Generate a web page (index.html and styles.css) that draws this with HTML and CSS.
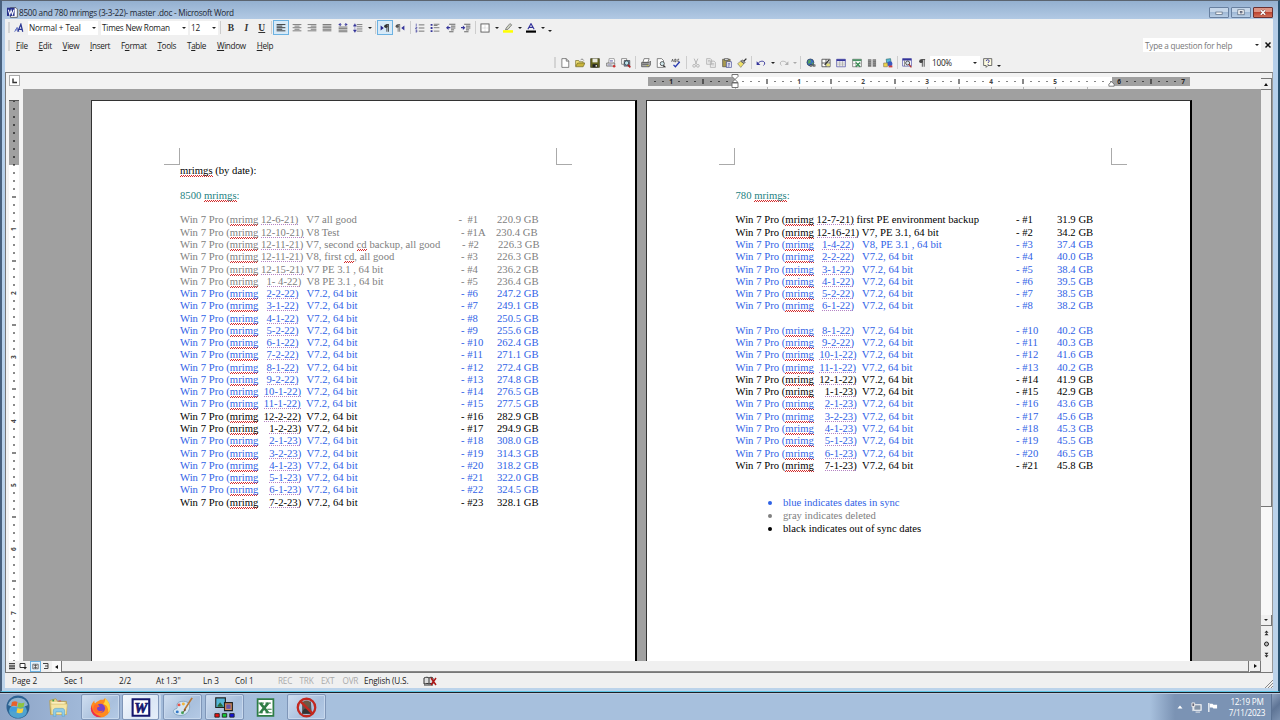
FILE: index.html
```html
<!DOCTYPE html>
<html lang="en">
<head>
    <meta charset="UTF-8">
    <meta name="viewport" content="width=device-width, initial-scale=1.0">
    <title>8500 and 780 mrimgs (3-3-22)- master .doc - Microsoft Word</title>
    <link rel="stylesheet" href="styles.css">
</head>
<body>

<div class="window">

    <!-- Title bar -->
    <div class="titlebar">
        <svg class="title-icon" viewBox="0 0 16 16"><path d="M5 1h8l2 2v12H5z" fill="#fff" stroke="#333"/><path d="M0 1h11v12H0z" fill="#26318c"/><path d="M2 4l2 7 2-6 2 6 2-7" fill="none" stroke="#fff" stroke-width="1.5"/></svg>
        <span class="title-text">8500 and 780 mrimgs (3-3-22)- master .doc - Microsoft Word</span>
        <div class="win-btns">
            <span class="win-btn"><svg viewBox="0 0 20 10"><rect x="6.500" y="4.500" width="7" height="2.500" fill="#fff" stroke="#556579" stroke-width=".8"/></svg></span>
            <span class="win-btn"><svg viewBox="0 0 20 10"><rect x="6.500" y="2" width="7" height="5.500" fill="#fff" stroke="#556579" stroke-width=".8"/><rect x="9" y="4" width="2.200" height="1.600" fill="#8fa9c9" stroke="#445" stroke-width=".7"/></svg></span>
            <span class="win-btn close"><svg viewBox="0 0 20 10"><path d="M7.500 2.500l5 5M12.500 2.500l-5 5" stroke="#6b3a3a" stroke-width="2.600"/><path d="M7.500 2.500l5 5M12.500 2.500l-5 5" stroke="#fff" stroke-width="1.600"/></svg></span>
        </div>
    </div>

    <!-- Formatting toolbar -->
    <div class="toolbar">
        <i class="handle first"></i>
        <span class="cell styles"><svg viewBox="0 0 16 16"><path d="M1 14l4-7 3 7M2 11h5" fill="none" stroke="#5b6bc0" stroke-width="1.500"/><path d="M6 14l5-12 3 12M8 10h6" fill="none" stroke="#2b3894" stroke-width="2"/></svg></span>
        <span class="combo style-box">Normal + Teal<i class="arrow"></i></span>
        <span class="combo font-box">Times New Roman<i class="arrow"></i></span>
        <span class="combo size-box">12<i class="arrow"></i></span>
        <i class="sep wide"></i>
        <span class="cell letter"><b>B</b></span>
        <span class="cell letter"><em>I</em></span>
        <span class="cell letter"><u>U</u></span>
        <i class="sep"></i>
        <span class="cell on"><svg viewBox="0 0 16 16"><path d="M1 2.500h14M1 5h9M1 7.500h14M1 10h9M1 12.500h14" stroke="#333" stroke-width="1.500"/></svg></span>
        <span class="cell"><svg viewBox="0 0 16 16"><path d="M1 2.500h14M4 5h8M1 7.500h14M4 10h8M1 12.500h14" stroke="#777" stroke-width="1.500"/></svg></span>
        <span class="cell"><svg viewBox="0 0 16 16"><path d="M1 2.500h14M6 5h9M1 7.500h14M6 10h9M1 12.500h14" stroke="#777" stroke-width="1.500"/></svg></span>
        <span class="cell"><svg viewBox="0 0 16 16"><path d="M1 2.500h14M1 5h14M1 7.500h14M1 10h14M1 12.500h14" stroke="#777" stroke-width="1.600"/></svg></span>
        <span class="cell"><svg viewBox="0 0 16 16"><path d="M1 6.500h14M1 9h14M1 11.500h14M1 14h14" stroke="#777" stroke-width="1.600"/><path d="M1 2.500l3-2v4zM15 2.500l-3-2v4zM4 2.500h2M10 2.500h2" fill="#34349a" stroke="#34349a" stroke-width=".7"/></svg></span>
        <span class="cell"><svg viewBox="0 0 16 16"><path d="M6 2.500h9M6 6h9M6 9.500h9M6 13h9" stroke="#666" stroke-width="1.300"/><path d="M3 1l2.500 4h-5zM3 15l2.500-4h-5zM3 5v6" fill="#34349a" stroke="#34349a" stroke-width=".6"/></svg></span>
        <i class="arrow drop"></i>
        <i class="sep"></i>
        <span class="cell on"><svg viewBox="0 0 16 16"><path d="M1 4l5 4-5 4z" fill="#22228a"/><path d="M14 2.500h-4M11 2v12M13.500 2v12" stroke="#333" stroke-width="1.400"/><circle cx="9.500" cy="5" r="2.800" fill="#333"/></svg></span>
        <span class="cell"><svg viewBox="0 0 16 16"><path d="M15 4l-5 4 5 4z" fill="#34349a"/><path d="M8 2.500H4M5 2v12M7.500 2v12" stroke="#555" stroke-width="1.200"/><circle cx="3.500" cy="5" r="2.500" fill="#555"/></svg></span>
        <i class="sep"></i>
        <span class="cell"><svg viewBox="0 0 16 16"><path d="M6 3h9M6 8h9M6 13h9" stroke="#666" stroke-width="1.400"/><path d="M2 1v4M1 6.500h2v1.500H1v1.500h2.500M1 11.500h2v3H1M1 13h2" fill="none" stroke="#34349a" stroke-width="1"/></svg></span>
        <span class="cell"><svg viewBox="0 0 16 16"><path d="M6 2h9M6 4h6M6 7.500h9M6 13h9" stroke="#666" stroke-width="1.300"/><path d="M1 1.500h3v3H1zM1 6.500h3v3H1zM1 11.500h3v3H1z" fill="#34349a"/></svg></span>
        <span class="cell"><svg viewBox="0 0 16 16"><path d="M5 2h10M8 5h7M8 8h7M8 11h5M5 14h7" stroke="#555" stroke-width="1.400"/><path d="M0 7.500l4-3.500v2.500h3v2H4V11z" fill="#34349a"/></svg></span>
        <span class="cell"><svg viewBox="0 0 16 16"><path d="M5 2h10M8 5h7M8 8h7M8 11h5M5 14h7" stroke="#555" stroke-width="1.400"/><path d="M7 7.500L3 4v2.500H0v2h3V11z" fill="#34349a"/></svg></span>
        <i class="sep"></i>
        <span class="cell"><svg viewBox="0 0 16 16"><rect x="1.500" y="1.500" width="13" height="13" fill="#fff" stroke="#555" stroke-width="1.400"/><path d="M8 3v10M3 8h10" stroke="#aaa" stroke-dasharray="1 1"/></svg></span>
        <i class="arrow drop"></i>
        <span class="cell"><svg viewBox="0 0 16 16"><path d="M5 8l6-7 3 2-6 7-4 1z" fill="#cfd4c4" stroke="#555"/><path d="M0 11.500h16v4H0z" fill="#ff0"/></svg></span>
        <i class="arrow drop"></i>
        <span class="cell"><svg viewBox="0 0 16 16"><path d="M3 10L8 1l5 9M5 7h6" fill="none" stroke="#34349a" stroke-width="1.800"/><path d="M0 12h16v3.500H0z" fill="#000"/></svg></span>
        <i class="arrow drop"></i>
        <i class="arrow more"></i>
    </div>

    <!-- Menu bar -->
    <div class="menubar">
        <i class="handle first"></i>
        <div class="menu">
            <span><u>F</u>ile</span>
            <span><u>E</u>dit</span>
            <span><u>V</u>iew</span>
            <span><u>I</u>nsert</span>
            <span>F<u>o</u>rmat</span>
            <span><u>T</u>ools</span>
            <span>T<u>a</u>ble</span>
            <span><u>W</u>indow</span>
            <span><u>H</u>elp</span>
        </div>
        <span class="combo question">Type a question for help<i class="arrow"></i></span>
        <svg class="close-doc" viewBox="0 0 8 8"><path d="M1.500 1.500l5 5M6.500 1.500l-5 5" stroke="#111" stroke-width="1.500"/></svg>
    </div>

    <!-- Standard toolbar -->
    <div class="toolbar standard">
        <i class="handle"></i>
        <span class="cell"><svg viewBox="0 0 16 16"><path d="M3 1h7l4 4v10H3z" fill="#fff" stroke="#444"/><path d="M10 1v4h4" fill="none" stroke="#444"/></svg></span>
        <span class="cell"><svg viewBox="0 0 16 16"><path d="M1 13V4h5l1 2h6v2" fill="#f2e37d" stroke="#66601f"/><path d="M1 14l3-6h12l-3 6z" fill="#c9b53c" stroke="#66601f"/><path d="M9 3c2-2 4-1 5 1" fill="none" stroke="#444"/></svg></span>
        <span class="cell"><svg viewBox="0 0 16 16"><path d="M1 1h14v14H1z" fill="#65651f" stroke="#2e2e16"/><path d="M4 1h8v6H4z" fill="#e9e9df"/><path d="M4 10h8v5H4z" fill="#222"/><path d="M9 11h2v3H9z" fill="#eee"/></svg></span>
        <span class="cell"><svg viewBox="0 0 16 16"><path d="M5 1h8l1 4-2 4H4z" fill="#fff" stroke="#777"/><path d="M1 8h13v5H1z" fill="#ddd" stroke="#555"/><path d="M3 11h6M6 4h5M6 6h5" stroke="#66a"/><circle cx="13" cy="13" r="2" fill="#c33"/></svg></span>
        <span class="cell"><svg viewBox="0 0 16 16"><path d="M1 1h8v9H1z" fill="#fff" stroke="#555"/><path d="M5 4h9v9H5z" fill="#8fa6d8" stroke="#333"/><circle cx="9" cy="8" r="3.500" fill="#bfe4ee" stroke="#233" stroke-width="1.300"/><path d="M11 11l4 4" stroke="#b02020" stroke-width="2.500"/></svg></span>
        <i class="sep"></i>
        <span class="cell"><svg viewBox="0 0 16 16"><path d="M5 1h8l-2 6H3z" fill="#fff" stroke="#444"/><path d="M1 7h12l2-2v6l-2 3H1z" fill="#a9a9a9" stroke="#333"/><path d="M2 10h10" stroke="#333"/><path d="M9 12h3" stroke="#cc0"/></svg></span>
        <span class="cell"><svg viewBox="0 0 16 16"><path d="M2 1h7l3 3v11H2z" fill="#fff" stroke="#444"/><circle cx="10" cy="9" r="3.300" fill="#cfe6ea" stroke="#333" stroke-width="1.200"/><path d="M12 12l3 3" stroke="#333" stroke-width="2"/></svg></span>
        <span class="cell"><svg viewBox="0 0 16 16"><path d="M1 6l1.500-4L4 6M6 2v4h2V2zM13 2h-2v4h2" fill="none" stroke="#333" stroke-width="1.100"/><path d="M4 11l3 3 7-8" fill="none" stroke="#2638b0" stroke-width="2"/></svg></span>
        <i class="sep"></i>
        <span class="cell"><svg viewBox="0 0 16 16"><path d="M5 1l4 9M11 1L7 10" stroke="#aaa" stroke-width="1.300"/><circle cx="5" cy="12.500" r="2.200" fill="none" stroke="#aaa" stroke-width="1.300"/><circle cx="11" cy="12.500" r="2.200" fill="none" stroke="#aaa" stroke-width="1.300"/></svg></span>
        <span class="cell"><svg viewBox="0 0 16 16"><path d="M1 1h6l2 2v7H1zM7 5h6l2 2v8H7z" fill="#eee" stroke="#aaa" stroke-width="1.200"/><path d="M3 4h4M3 6h3M9 9h4M9 11h4" stroke="#aaa"/></svg></span>
        <span class="cell"><svg viewBox="0 0 16 16"><path d="M1 2h12v12H1z" fill="#a89a50" stroke="#444"/><path d="M4 1h6v3H4z" fill="#ddd" stroke="#444"/><path d="M7 6h8v9H7z" fill="#fff" stroke="#26318c"/><path d="M9 9h4M9 11h4M9 13h3" stroke="#26318c"/></svg></span>
        <span class="cell"><svg viewBox="0 0 16 16"><path d="M1 9l5-4 5 4-5 6z" fill="#f0e168" stroke="#777"/><path d="M6 5l3-2 4 4-2 2z" fill="#999" stroke="#444"/><path d="M11 5l4-4" stroke="#333" stroke-width="2.200"/></svg></span>
        <i class="sep"></i>
        <span class="cell"><svg viewBox="0 0 16 16"><path d="M1 5v6h6z" fill="#34349a"/><path d="M3 9c3-5 10-5 11-1 0 2-1 3-2 4" fill="none" stroke="#34349a" stroke-width="1.500"/></svg></span>
        <i class="arrow drop"></i>
        <span class="cell"><svg viewBox="0 0 16 16"><path d="M15 5v6H9z" fill="#b0b0b0"/><path d="M13 9C10 4 3 4 2 8c0 2 1 3 2 4" fill="none" stroke="#b0b0b0" stroke-width="1.400"/></svg></span>
        <i class="arrow drop pale"></i>
        <i class="sep"></i>
        <span class="cell"><svg viewBox="0 0 16 16"><circle cx="7" cy="7" r="5.500" fill="#3c6fc0" stroke="#234"/><path d="M4 3l4 1-1 4-4 1zM9 7l3 1-2 3z" fill="#59a851"/><path d="M6 12h4M11 12h4" stroke="#333" stroke-width="3"/><path d="M7 12h2M12 12h2" stroke="#ddd"/></svg></span>
        <span class="cell"><svg viewBox="0 0 16 16"><path d="M1.500 2h13v12h-13zM1.500 8h13M8 2v12" fill="#fff" stroke="#444" stroke-width="1.300"/><path d="M6 11l7-8" stroke="#333" stroke-width="2"/><path d="M9 9h5v4H9z" fill="#e7e177"/></svg></span>
        <span class="cell"><svg viewBox="0 0 16 16"><path d="M1 2h14v12H1z" fill="#fff" stroke="#34349a"/><path d="M1 2h14v3H1z" fill="#34349a"/><path d="M1 8h14M1 11h14M6 5v9M10.500 5v9" stroke="#999"/></svg></span>
        <span class="cell"><svg viewBox="0 0 16 16"><path d="M1 2h14v12H1z" fill="#fff" stroke="#555"/><path d="M1 2h14v3H1z" fill="#4a9264"/><path d="M1 9h14M6 5v9" stroke="#999"/><path d="M6 7l7 7M13 7l-7 7" stroke="#2f8a4c" stroke-width="2"/></svg></span>
        <span class="cell"><svg viewBox="0 0 16 16"><path d="M1.500 2h5.500v12H1.500zM9 2h5.500v12H9z" fill="#777"/><path d="M2 4h5M2 7h5M2 10h5M9 4h5M9 7h5M9 10h5" stroke="#aaa" stroke-width=".7"/></svg></span>
        <span class="cell"><svg viewBox="0 0 16 16"><path d="M5 2l7-1 1 7H6z" fill="#56b8d6" stroke="#266"/><circle cx="11" cy="9" r="4" fill="#3b58c0"/><path d="M1 8h6v6H1z" fill="#f0d648" stroke="#875"/><path d="M9 12h6v3H9z" fill="#cc4040"/></svg></span>
        <i class="sep"></i>
        <span class="cell"><svg viewBox="0 0 16 16"><path d="M1 1h14v12H1z" fill="#fff" stroke="#34349a"/><path d="M1 1h14v3H1z" fill="#34349a"/><path d="M4 4v9" stroke="#555"/><circle cx="9" cy="8" r="3.200" fill="#d8e4ec" stroke="#333" stroke-width="1.300"/><path d="M11 10l4 5" stroke="#a33" stroke-width="2"/></svg></span>
        <span class="cell"><svg viewBox="0 0 16 16"><path d="M13 2.500H7M8.500 2v12M11.500 2v12" stroke="#444" stroke-width="1.400"/><circle cx="6.500" cy="5" r="3" fill="#444"/></svg></span>
        <span class="combo zoom">100%<i class="arrow"></i></span>
        <span class="cell"><svg viewBox="0 0 16 16"><path d="M1 1h13v11H8l-3 3v-3H1z" fill="#fdfbe0" stroke="#444" stroke-width="1.200"/><path d="M5 5c0-3 5-3 5 0 0 1.500-2 1.500-2 3M8 9.500v1.500" fill="none" stroke="#34349a" stroke-width="1.500"/></svg></span>
        <i class="arrow more"></i>
    </div>

    <div class="workspace">

        <!-- Horizontal ruler -->
        <div class="hruler">
            <span class="tab-kind"><svg viewBox="0 0 9 9"><path d="M3 2.500v4h4" fill="none" stroke="#333" stroke-width="1.400"/></svg></span>
            <div class="hscale">
                <div class="hpart margin left"><b>1</b></div>
                <div class="hpart text"><b>1</b><b>2</b><b>3</b><b>4</b><b>5</b></div>
                <div class="hpart margin right"><b>6</b><b>7</b></div>
                <svg class="indent-left" viewBox="0 0 8 14"><path d="M1 .5h6v2L4 5.500 1 2.500zM4 5.500l3 3H1zM1 9h6v4.500H1z" fill="#fff" stroke="#666" stroke-width=".9"/></svg>
                <svg class="indent-right" viewBox="0 0 8 6"><path d="M1 5.500V3l3-2.500L7 3v2.500z" fill="#fff" stroke="#666" stroke-width=".9"/></svg>
            </div>
        </div>

        <div class="vruler">
            <div class="vpart margin"></div>
            <div class="vpart text"><b>1</b><b>2</b><b>3</b><b>4</b><b>5</b><b>6</b><b>7</b></div>
        </div>

        <div class="pages">
            <div class="page">
                <i class="corner tl"></i><i class="corner tr"></i>
                <p><s>mrimgs</s> (by date):</p>
                <p></p>
                <p class="teal">8500 <s>mrimgs</s>:</p>
                <p></p>
                <div class="list">
                    <p class="row gray"><span>Win 7 Pro (<s>mrimg</s> <q>12-6-21)</q>   V7 all good</span><span class="back2">-  #1</span><span>220.9 GB</span></p>
                    <p class="row gray"><span>Win 7 Pro (<s>mrimg</s> <q>12-10-21)</q> V8 Test</span><span>- #1A</span><span class="back1">230.4 GB</span></p>
                    <p class="row gray"><span>Win 7 Pro (<s>mrimg</s> <q>12-11-21)</q> V7, second <s>cd</s> backup, all good</span><span class="fwd1">- #2</span><span class="fwd1">226.3 GB</span></p>
                    <p class="row gray"><span>Win 7 Pro (<s>mrimg</s> <q>12-11-21)</q> V8, first <s>cd</s>, all good</span><span>- #3</span><span>226.3 GB</span></p>
                    <p class="row gray"><span>Win 7 Pro (<s>mrimg</s> <q>12-15-21)</q> V7 PE 3.1 , 64 bit</span><span>- #4</span><span>236.2 GB</span></p>
                    <p class="row gray"><span>Win 7 Pro (<s>mrimg</s>   <q>1- 4-22)</q>  V8 PE 3.1 , 64 bit</span><span>- #5</span><span>236.4 GB</span></p>
                    <p class="row blue"><span>Win 7 Pro (<s>mrimg</s>   <q>2-2-22)</q>   V7.2, 64 bit</span><span>- #6</span><span>247.2 GB</span></p>
                    <p class="row blue"><span>Win 7 Pro (<s>mrimg</s>   <q>3-1-22)</q>   V7.2, 64 bit</span><span>- #7</span><span>249.1 GB</span></p>
                    <p class="row blue"><span>Win 7 Pro (<s>mrimg</s>   <q>4-1-22)</q>   V7.2, 64 bit</span><span>- #8</span><span>250.5 GB</span></p>
                    <p class="row blue"><span>Win 7 Pro (<s>mrimg</s>   <q>5-2-22)</q>   V7.2, 64 bit</span><span>- #9</span><span>255.6 GB</span></p>
                    <p class="row blue"><span>Win 7 Pro (<s>mrimg</s>   <q>6-1-22)</q>   V7.2, 64 bit</span><span>- #10</span><span>262.4 GB</span></p>
                    <p class="row blue"><span>Win 7 Pro (<s>mrimg</s>   <q>7-2-22)</q>   V7.2, 64 bit</span><span>- #11</span><span>271.1 GB</span></p>
                    <p class="row blue"><span>Win 7 Pro (<s>mrimg</s>   <q>8-1-22)</q>   V7.2, 64 bit</span><span>- #12</span><span>272.4 GB</span></p>
                    <p class="row blue"><span>Win 7 Pro (<s>mrimg</s>   <q>9-2-22)</q>   V7.2, 64 bit</span><span>- #13</span><span>274.8 GB</span></p>
                    <p class="row blue"><span>Win 7 Pro (<s>mrimg</s>  <q>10-1-22)</q>  V7.2, 64 bit</span><span>- #14</span><span>276.5 GB</span></p>
                    <p class="row blue"><span>Win 7 Pro (<s>mrimg</s>  <q>11-1-22)</q>  V7.2, 64 bit</span><span>- #15</span><span>277.5 GB</span></p>
                    <p class="row"><span>Win 7 Pro (<s>mrimg</s>  <q>12-2-22)</q>  V7.2, 64 bit</span><span>- #16</span><span>282.9 GB</span></p>
                    <p class="row"><span>Win 7 Pro (<s>mrimg</s>    <q>1-2-23)</q>  V7.2, 64 bit</span><span>- #17</span><span>294.9 GB</span></p>
                    <p class="row blue"><span>Win 7 Pro (<s>mrimg</s>    <q>2-1-23)</q>  V7.2, 64 bit</span><span>- #18</span><span>308.0 GB</span></p>
                    <p class="row blue"><span>Win 7 Pro (<s>mrimg</s>    <q>3-2-23)</q>  V7.2, 64 bit</span><span>- #19</span><span>314.3 GB</span></p>
                    <p class="row blue"><span>Win 7 Pro (<s>mrimg</s>    <q>4-1-23)</q>  V7.2, 64 bit</span><span>- #20</span><span>318.2 GB</span></p>
                    <p class="row blue"><span>Win 7 Pro (<s>mrimg</s>    <q>5-1-23)</q>  V7.2, 64 bit</span><span>- #21</span><span>322.0 GB</span></p>
                    <p class="row blue"><span>Win 7 Pro (<s>mrimg</s>    <q>6-1-23)</q>  V7.2, 64 bit</span><span>- #22</span><span>324.5 GB</span></p>
                    <p class="row"><span>Win 7 Pro (<s>mrimg</s>    <q>7-2-23)</q>  V7.2, 64 bit</span><span>- #23</span><span>328.1 GB</span></p>
                </div>
            </div>

            <div class="page second">
                <i class="corner tl"></i><i class="corner tr"></i>
                <p></p>
                <p></p>
                <p class="teal">780 <s>mrimgs</s>:</p>
                <p></p>
                <div class="list">
                    <p class="row"><span>Win 7 Pro (<s>mrimg</s> <q>12-7-21)</q> first PE environment backup</span><span>- #1</span><span>31.9 GB</span></p>
                    <p class="row"><span>Win 7 Pro (<s>mrimg</s> <q>12-16-21)</q> V7, PE 3.1, 64 bit</span><span>- #2</span><span>34.2 GB</span></p>
                    <p class="row blue"><span>Win 7 Pro (<s>mrimg</s>   <q>1-4-22)</q>   V8, PE 3.1 , 64 bit</span><span>- #3</span><span>37.4 GB</span></p>
                    <p class="row blue"><span>Win 7 Pro (<s>mrimg</s>   <q>2-2-22)</q>   V7.2, 64 bit</span><span>- #4</span><span>40.0 GB</span></p>
                    <p class="row blue"><span>Win 7 Pro (<s>mrimg</s>   <q>3-1-22)</q>   V7.2, 64 bit</span><span>- #5</span><span>38.4 GB</span></p>
                    <p class="row blue"><span>Win 7 Pro (<s>mrimg</s>   <q>4-1-22)</q>   V7.2, 64 bit</span><span>- #6</span><span>39.5 GB</span></p>
                    <p class="row blue"><span>Win 7 Pro (<s>mrimg</s>   <q>5-2-22)</q>   V7.2, 64 bit</span><span>- #7</span><span>38.5 GB</span></p>
                    <p class="row blue"><span>Win 7 Pro (<s>mrimg</s>   <q>6-1-22)</q>   V7.2, 64 bit</span><span>- #8</span><span>38.2 GB</span></p>
                    <p></p>
                    <p class="row blue"><span>Win 7 Pro (<s>mrimg</s>   <q>8-1-22)</q>   V7.2, 64 bit</span><span>- #10</span><span>40.2 GB</span></p>
                    <p class="row blue"><span>Win 7 Pro (<s>mrimg</s>   <q>9-2-22)</q>   V7.2, 64 bit</span><span>- #11</span><span>40.3 GB</span></p>
                    <p class="row blue"><span>Win 7 Pro (<s>mrimg</s>  <q>10-1-22)</q>  V7.2, 64 bit</span><span>- #12</span><span>41.6 GB</span></p>
                    <p class="row blue"><span>Win 7 Pro (<s>mrimg</s>  <q>11-1-22)</q>  V7.2, 64 bit</span><span>- #13</span><span>40.2 GB</span></p>
                    <p class="row"><span>Win 7 Pro (<s>mrimg</s>  <q>12-1-22)</q>  V7.2, 64 bit</span><span>- #14</span><span>41.9 GB</span></p>
                    <p class="row"><span>Win 7 Pro (<s>mrimg</s>    <q>1-1-23)</q>  V7.2, 64 bit</span><span>- #15</span><span>42.9 GB</span></p>
                    <p class="row blue"><span>Win 7 Pro (<s>mrimg</s>    <q>2-1-23)</q>  V7.2, 64 bit</span><span>- #16</span><span>43.6 GB</span></p>
                    <p class="row blue"><span>Win 7 Pro (<s>mrimg</s>    <q>3-2-23)</q>  V7.2, 64 bit</span><span>- #17</span><span>45.6 GB</span></p>
                    <p class="row blue"><span>Win 7 Pro (<s>mrimg</s>    <q>4-1-23)</q>  V7.2, 64 bit</span><span>- #18</span><span>45.3 GB</span></p>
                    <p class="row blue"><span>Win 7 Pro (<s>mrimg</s>    <q>5-1-23)</q>  V7.2, 64 bit</span><span>- #19</span><span>45.5 GB</span></p>
                    <p class="row blue"><span>Win 7 Pro (<s>mrimg</s>    <q>6-1-23)</q>  V7.2, 64 bit</span><span>- #20</span><span>46.5 GB</span></p>
                    <p class="row"><span>Win 7 Pro (<s>mrimg</s>    <q>7-1-23)</q>  V7.2, 64 bit</span><span>- #21</span><span>45.8 GB</span></p>
                </div>
                <ul class="legend">
                    <li class="blue">blue indicates dates in sync</li>
                    <li class="gray">gray indicates deleted</li>
                    <li>black indicates out of sync dates</li>
                </ul>
            </div>
        </div>

        <div class="vscroll">
            <i class="split"></i>
            <span class="sbtn"><i class="up"></i></span>
            <div class="vthumb"></div>
            <div class="vtrack"></div>
            <span class="sbtn"><i class="arrow"></i></span>
            <svg class="browse" viewBox="0 0 11 35"><path d="M5.500 4.500l2 2.200h-4zM5.500 7l2 2.200h-4zM5.500 29l2-2.200h-4zM5.500 31.500l2-2.200h-4z" fill="#222"/><circle cx="5.500" cy="18" r="2" fill="#bbb" stroke="#222"/></svg>
        </div>

        <div class="hscroll">
            <span class="view"><svg viewBox="0 0 10 10"><path d="M2 2.500h6M2 4.200h6M2 5.900h6M2 7.600h6" stroke="#444" stroke-width="1.100"/></svg></span>
            <span class="view"><svg viewBox="0 0 10 10"><path d="M2 2.500h5v4H2z" fill="#fff" stroke="#333"/><path d="M5 6h4L7 8.500z" fill="#222"/></svg></span>
            <span class="view on"><svg viewBox="0 0 10 10"><path d="M2 2.500h6v5H2zM5 2.500v5M3 4h4M3 6h4" fill="#fff" stroke="#444" stroke-width=".8"/></svg></span>
            <span class="view"><svg viewBox="0 0 10 10"><path d="M2 2.500h5v5H3M4 5h3" fill="none" stroke="#444"/></svg></span>
            <span class="lbtn"><i class="left-arrow"></i></span>
            <div class="hthumb"></div>
            <span class="sbtn"><i class="right-arrow"></i></span>
        </div>
    </div>

    <!-- Status bar -->
    <div class="status">
        <span class="st-page">Page 2</span>
        <span class="st-sec">Sec 1</span>
        <span class="st-of">2/2</span>
        <span class="st-at">At 1.3"</span>
        <span class="st-ln">Ln 3</span>
        <span class="st-col">Col 1</span>
        <span class="off">REC</span>
        <span class="off">TRK</span>
        <span class="off">EXT</span>
        <span class="off">OVR</span>
        <span class="st-lang">English (U.S.</span>
        <svg class="book" viewBox="0 0 14 10"><path d="M1 8V2c2-1 4-1 5 0 1-1 3-1 4 0v6c-1-.7-3-.7-4 0-1-.7-3-.7-5 0z" fill="#ddd" stroke="#333"/><path d="M6 2v6M1 9h9" stroke="#333"/><path d="M8 2l5 7M13 2L8 9" stroke="#b01818" stroke-width="1.500"/></svg>
        <svg class="grip" viewBox="0 0 9 9"><path d="M1 9l8-8M4 9l5-5M7 9l2-2" stroke="#888"/></svg>
    </div>
</div>

<!-- Taskbar -->
<div class="taskbar">
    <span class="orb"><svg viewBox="0 0 24 24"><circle cx="12" cy="12" r="11.500" fill="#2d6292"/><ellipse cx="12" cy="16" rx="9" ry="7" fill="#4fa3cf"/><path d="M2 10a10.500 10.500 0 0 1 20 0c-5 3-14 3-20 0z" fill="#8fb3cf"/><path d="M6 7c2-1 4-1 5.500 0l-.8 4.500C9 10.500 7 10.500 5 11.500z" fill="#e8612c"/><path d="M12.500 7.500c2 1 4 1 6 0l-1 4.500c-2 1-4 1-6 0z" fill="#8cc43f"/><path d="M5 12.700c2-1 4-1 5.500 0L9.700 17c-2-1-4-1-5.700 0z" fill="#3f9ce0"/><path d="M11.500 13c2 1 4 1 6 0l-1 4.500c-2 1-4 1-6 0z" fill="#fbd23d"/></svg></span>
    <span class="task plain"><svg viewBox="0 0 24 24"><path d="M2 4l7-2 2 3h10v15H3z" fill="#ead58b" stroke="#b49a50"/><path d="M4 6h15v4H4z" fill="#fff7cf"/><path d="M3 8h19l-1 12H4z" fill="#f6e5a3" stroke="#cbb264" stroke-width=".7"/><path d="M6 22v-6c0-2 1-3 3-3h7c2 0 3 1 3 3v6h-3v-5H9v5z" fill="#8ecbe8" stroke="#5ba3cc" stroke-width=".7"/><path d="M5 3h2v2H5z" fill="#3ba348"/><path d="M12 4h3v1h-3z" fill="#d44"/></svg></span>
    <span class="task"><svg viewBox="0 0 24 24"><path d="M12 3c3 1 5-1 5-2 3 3 6 6 6 12a11 10.500 0 0 1-22 0C1 9 3 6 5 4c0 2 0 3 1 3 2-2 4-3 6-4z" fill="#ff8a1e"/><path d="M17 1c3 3 6 6 6 12 0 2-1 4-2 5 0-6-2-9-6-10 2-2 3-5 2-7z" fill="#ffd43a"/><path d="M2 9c0 8 5 12 11 13-6 3-12-3-12-9z" fill="#ed2f4c"/><circle cx="12" cy="13" r="5.200" fill="#7842c8"/><path d="M5 9c3-1 5 0 6 2-2 0-3 1-3 2 0 3 5 4 7 2-1 4-8 5-11 0-1-2 0-4 1-6z" fill="#ff6a2a"/></svg></span>
    <span class="task active"><svg viewBox="0 0 24 24"><path d="M3 2.500h19v19H3z" fill="#fff" stroke="#15176e" stroke-width="2.400"/><text class="logo-w" x="12.500" y="18" text-anchor="middle">W</text></svg></span>
    <span class="task stack"><svg viewBox="0 0 24 24"><path d="M11 5c7-1 10 3 9 8s-6 9-12 8-7-4-6-6 4-1 4-3-2-6 5-7z" fill="#d5e6f3" stroke="#7fa0bd"/><circle cx="8" cy="9" r="1.700" fill="#e8534a"/><circle cx="13" cy="8" r="1.700" fill="#f2b53b"/><circle cx="6" cy="17" r="1.700" fill="#3478c8"/><circle cx="12" cy="18" r="1.700" fill="#45a35b"/><path d="M23 1l-9 14" stroke="#b87836" stroke-width="2"/><path d="M15 13l-3 5 4-3z" fill="#714a24"/></svg></span>
    <span class="task"><svg viewBox="0 0 24 24"><path d="M2 1h11v11H2z" fill="#54b6d6" stroke="#222" stroke-width="1.300"/><path d="M4 10l3-4 4 5H4z" fill="#286d3c"/><path d="M12 6.500h9v9h-9z" fill="#d58d58" stroke="#222" stroke-width="1.300"/><path d="M14 8.500h5v5h-5z" fill="#6b54a5"/><path d="M1 19h5v4H1z" fill="#e11" stroke="#222"/><path d="M9.500 19h5v4h-5z" fill="#1c3" stroke="#222"/><path d="M18 19h5v4h-5z" fill="#11d" stroke="#222"/></svg></span>
    <span class="task plain excel"><svg viewBox="0 0 24 24"><path d="M3 2.500h18v19H3z" fill="#fff" stroke="#2f7d46" stroke-width="2"/><path d="M6 7l9 11M15 7L6 18" stroke="#2f7d46" stroke-width="3"/><path d="M4 7h6M12 7h6M4 18h5M12 18h7M14 14h5" stroke="#2f7d46" stroke-width="1.400"/></svg></span>
    <span class="task"><svg viewBox="0 0 24 24"><path d="M7 5h10l1 14H7z" fill="#555"/><circle cx="12" cy="8" r="4" fill="#6d5845"/><path d="M7 19c0-8 10-8 11 0z" fill="#333"/><circle cx="12" cy="12" r="10" fill="none" stroke="#c3281f" stroke-width="2.600"/><path d="M5 5l14 14" stroke="#c3281f" stroke-width="2.600"/></svg></span>
    <div class="tray">
        <svg class="tray-up" viewBox="0 0 6 4"><path d="M3 .5l2.500 3h-5z" fill="#fff"/></svg>
        <svg class="tray-ico" viewBox="0 0 12 12"><path d="M3 3h8v6H3z" fill="#8494a8" stroke="#fff" stroke-width="1.200"/><path d="M5 11h5M1 1h3v4H1zM2 5v5" fill="#667" stroke="#eee"/></svg>
        <svg class="tray-ico" viewBox="0 0 12 12"><path d="M2 1v10" stroke="#fff" stroke-width="1.300"/><path d="M3 2h3l1 1h4v4H7L6 6H3z" fill="#fff"/></svg>
        <div class="clock"><span>12:19 PM</span><span>7/11/2023</span></div>
        <i class="peek"></i>
    </div>
</div>

</body>
</html>
```
FILE: styles.css
```css
*{
    box-sizing: border-box;
}

body{
    margin: 0;
    width: 1280px;
    height: 720px;
    overflow: hidden;
    background: #1b1f26;
    font-family: "Open Sans", "Noto Sans", sans-serif;
    font-size: 8.2px;
    letter-spacing: -.27px;
    color: #222;
}

i{
    display: block;
    flex: none;
}

svg{
    display: block;
    flex: none;
}

.window{
    height: 692px;
    padding: 1px 5px 4px 3px;
    background: linear-gradient(#94b0d0 0, #b5cce6 20px, #b5d0ec 80px, #bcd3ea);
    border-top: 1px solid #5b6470;
    border-left: 2px solid #49617e;
    border-right: 2px solid #28506e;
    border-bottom: 1px solid #5cc4e4;
}

/* title bar */
.titlebar{
    display: flex;
    align-items: center;
    height: 17px;
    padding-top: 4px;
}

.title-icon{
    width: 11px;
    height: 11px;
    margin-left: 2px;
}

.title-text{
    margin-left: 1px;
    font-size: 8.2px;
    letter-spacing: -.25px;
    line-height: 12px;
    color: #1d2733;
    white-space: nowrap;
}

.win-btns{
    display: flex;
    gap: 2px;
    margin-left: auto;
}

.win-btn{
    width: 20px;
    height: 11px;
    border: 1px solid #6880a0;
    border-radius: 1px;
    background: linear-gradient(#c5d6e9 45%, #9fb8d5 50%, #b9cee5);
}

.win-btn svg{
    width: 18px;
    height: 9px;
}

.win-btn.close{
    border-color: #6b3030;
    background: linear-gradient(#dd9484 45%, #bd4430 50%, #d0705a);
}

/* toolbars */
.toolbar, .menubar{
    display: flex;
    align-items: center;
    height: 17px;
    background: #f0f0f0;
}

.menubar{
    height: 18px;
}

.standard{
    height: 18px;
    padding-left: 548px;
    padding-bottom: 1px;
}

.handle{
    width: 5px;
    height: 11px;
    border-left: 2px solid #d4d4d4;
}

.handle.first{
    margin-left: 3px;
    width: 4px;
}

.standard .handle{
    margin-left: 1px;
    width: 3px;
}

.cell{
    display: flex;
    align-items: center;
    justify-content: center;
    flex: none;
    width: 15.4px;
    height: 15px;
}

.cell svg{
    width: 10px;
    height: 10px;
}

.cell.styles{
    width: 13px;
    margin-right: 3px;
}

.cell.on{
    border: 1px solid #6cb2e2;
    background: #d7eaf8;
}

.letter{
    font-family: "Liberation Serif", serif;
    font-size: 9.5px;
    letter-spacing: 0;
    color: #333;
}

.letter em, .letter u{
    font-weight: bold;
}

.combo{
    display: flex;
    align-items: center;
    justify-content: space-between;
    flex: none;
    height: 14px;
    padding: 0 1px;
    background: #fff;
    white-space: nowrap;
}

.combo .arrow{
    margin-right: 1px;
}

.style-box{
    width: 70px;
    margin-right: 3px;
    letter-spacing: -.13px;
}

.font-box{
    width: 87px;
    margin-right: 2px;
    letter-spacing: -.22px;
}

.size-box{
    width: 28px;
}

.arrow{
    width: 4px;
    height: 2px;
    border-left: 2px solid transparent;
    border-right: 2px solid transparent;
    border-top: 2px solid #222;
}

.arrow.drop{
    margin: 1px 1.75px 0 1.75px;
}

.arrow.pale{
    margin: 1px 1.5px 0 1.5px;
    border-top-color: #aaa;
}

.arrow.more{
    margin: 7px 0 0 2px;
}

.sep{
    width: 4px;
    height: 13px;
    background: linear-gradient(#cdcdcd, #cdcdcd) no-repeat 50% 0 / 1px 100%;
}

.sep.wide{
    width: 5.3px;
}

.menu{
    display: flex;
    gap: 10.8px;
    padding-left: 4px;
    letter-spacing: -.32px;
}

.menu u{
    text-underline-offset: 1px;
    text-decoration-thickness: .7px;
}

.question{
    width: 118px;
    height: 14px;
    margin-left: auto;
    padding-left: 2px;
    letter-spacing: -.22px;
    color: #777;
}

.close-doc{
    width: 8px;
    height: 8px;
    margin: 0 1px 0 3px;
}

.zoom{
    width: 50px;
    padding: 0 2px;
}

/* workspace: rulers, pages, scrollbars */
.workspace{
    display: grid;
    grid-template-columns: 17px 1fr 11px;
    grid-template-rows: 16px 572px 11px;
    height: 601px;
    border-top: 1px solid #777;
    border-left: 1px solid #777;
    border-right: 1px solid #999;
    border-bottom: 1px solid #777;
    background: #f0f0f0;
}

.hruler{
    grid-column: 1 / 3;
    display: flex;
    background: #f3f3f3;
}

.tab-kind{
    width: 11px;
    height: 11px;
    margin: 2px 0 0 3px;
    border: 1px solid #aaa;
    background: #fff;
}

.tab-kind svg{
    width: 9px;
    height: 9px;
}

.hscale{
    position: relative;
    display: flex;
    margin-left: 628px;
    padding-top: 4px;
}

.hpart{
    display: flex;
    height: 9px;
}

.hpart b{
    position: relative;
    width: 8px;
    margin: 0 28px;
    background: #fff;
    font-size: 6.5px;
    letter-spacing: 0;
    line-height: 9px;
    color: #444;
    text-align: center;
}

/* half-inch mark next to each number */
.hpart b::before{
    content: "";
    position: absolute;
    left: -29px;
    top: 2px;
    width: 2px;
    height: 5px;
    background: #888;
}

.hpart.text{
    width: 377px;
    padding-left: 32px;
    background: radial-gradient(circle, #888 .7px, transparent 1.1px) 4px 0 / 8px 9px, #fff;
}

/* default tab stops below the scale */
.hpart.text::after{
    content: "";
    position: absolute;
    left: 87px;
    top: 14px;
    width: 377px;
    height: 2px;
    background: repeating-linear-gradient(90deg, #b5b5b5 0 1px, transparent 1px 32px);
}

.hpart.margin b{
    background: #a0a0a0;
    color: #222;
}

.hpart.margin b::before{
    background: #555;
}

.hpart.left{
    width: 87px;
    background: radial-gradient(circle, #444 .7px, transparent 1.1px) 3px 0 / 8px 9px, #a0a0a0;
}

.hpart.left b{
    margin-left: 19px;
}

.hpart.left b::before{
    left: 35px;
}

.hpart.right{
    width: 78px;
    background: radial-gradient(circle, #444 .7px, transparent 1.1px) 3px 0 / 8px 9px, #a0a0a0;
}

.hpart.right b:first-child{
    margin-left: 3px;
}

.hpart.right b:first-child::before{
    display: none;
}

.hpart.right b:last-child{
    margin-right: 0;
}

.indent-left{
    position: absolute;
    left: 83px;
    top: 1px;
    width: 8px;
    height: 14px;
}

.indent-right{
    position: absolute;
    left: 460px;
    top: 8px;
    width: 7px;
    height: 6px;
}

.vruler{
    grid-row: 2;
    padding: 11px 0 0 3px;
    background: #f3f3f3;
    overflow: hidden;
}

.vpart{
    width: 10px;
    height: 65px;
    border-top: 1px solid #555;
    background: radial-gradient(circle, #444 .7px, transparent 1.1px) 0 4px / 10px 8px, #a0a0a0;
}

.vpart.text{
    height: 500px;
    padding-top: 28px;
    border: none;
    background: radial-gradient(circle, #888 .7px, transparent 1.1px) 0 4px / 10px 8px, #fff;
}

.vpart b{
    position: relative;
    display: block;
    width: 10px;
    height: 8px;
    margin: 32px 0 56px;
    background: #fff;
    font-size: 6.5px;
    letter-spacing: 0;
    line-height: 10px;
    color: #444;
    text-align: center;
    writing-mode: vertical-rl;
    transform: rotate(180deg);
}

.vpart b::before{
    content: "";
    position: absolute;
    left: 3px;
    bottom: -29px;
    width: 4px;
    height: 2px;
    background: #888;
}

.pages{
    display: flex;
    gap: 9px;
    padding: 11px 0 0 68px;
    background: #a0a0a0;
    overflow: hidden;
}

.page{
    position: relative;
    flex: none;
    width: 546px;
    height: 600px;
    padding: 64.4px 0 0 88px;
    border: 1px solid #333;
    border-right: 2px solid #000;
    background: #fff;
    font-family: "Liberation Serif", "Times New Roman", serif;
    font-size: 10.667px;
    letter-spacing: 0;
    line-height: 12.27px;
    color: #000;
}

.page p{
    height: 12.27px;
    margin: 0;
    white-space: pre;
}

.page.second{
    padding-left: 88.5px;
}

.page .teal{
    color: #1b7f7f;
}

.page .gray{
    color: #808080;
}

.page .blue{
    color: #2f62e6;
}

.page .row{
    display: grid;
    grid-template-columns: 281px 36px 60px;
    word-spacing: .08px;
}

.page.second .row{
    grid-template-columns: 280.5px 41px 60px;
}

.back1{
    margin-left: -1px;
}

.back2{
    margin-left: -2.5px;
}

.fwd1{
    margin-left: 1px;
}

/* spelling squiggle */
.page s{
    padding-bottom: 1px;
    text-decoration: none;
    background:
        repeating-linear-gradient(90deg, #d42a2a 0 1px, transparent 1px 2px) 0 100% / 100% 1px no-repeat,
        repeating-linear-gradient(90deg, transparent 0 1px, #d42a2a 1px 2px) 0 calc(100% - 1px) / 100% 1px no-repeat;
}

/* smart tag dots under the dates */
.page q{
    quotes: none;
    background: repeating-linear-gradient(90deg, #b583c4 0 1px, transparent 1px 2px) 0 100% / 100% 1px no-repeat;
}

.page q::before, .page q::after{
    content: none;
}

.corner{
    position: absolute;
    top: 47px;
    width: 16px;
    height: 17px;
    border-bottom: 1px solid #aaa;
}

.corner.tl{
    left: 72px;
    border-right: 1px solid #aaa;
}

.corner.tr{
    left: 464px;
    border-left: 1px solid #aaa;
}

.legend{
    margin: 24.6px 0 0 48.5px;
    padding: 0;
    list-style: none;
}

.legend li{
    display: flex;
    align-items: center;
    height: 13px;
}

.legend li::before{
    content: "";
    width: 4px;
    height: 4px;
    margin: 0 11px 0 -16px;
    border-radius: 50%;
    background: currentColor;
}

.vscroll{
    grid-column: 3;
    grid-row: 1 / 3;
    display: flex;
    flex-direction: column;
    background: #f5f5f5;
}

.split{
    height: 6px;
    border-bottom: 1px solid #777;
    background: #f0f0f0;
}

.sbtn{
    display: flex;
    align-items: center;
    justify-content: center;
    flex: none;
    width: 11px;
    height: 11px;
    border-right: 1px solid #777;
    border-bottom: 1px solid #777;
    background: #f0f0f0;
}

.up{
    border-left: 2px solid transparent;
    border-right: 2px solid transparent;
    border-bottom: 3px solid #111;
}

.left-arrow{
    border-top: 2.5px solid transparent;
    border-bottom: 2.5px solid transparent;
    border-right: 3px solid #111;
}

.right-arrow{
    border-top: 2.5px solid transparent;
    border-bottom: 2.5px solid transparent;
    border-left: 3px solid #111;
}

.vthumb{
    height: 417px;
    border-right: 1px solid #777;
    border-bottom: 1px solid #777;
    background: #f0f0f0;
}

.vtrack{
    flex: 1;
    background: #f8f8f8;
}

.browse{
    width: 11px;
    height: 35px;
    background: #f0f0f0;
}

.hscroll{
    grid-column: 1 / 3;
    display: flex;
    padding-left: 1px;
    background: #f0f0f0;
}

.view{
    width: 11.3px;
    height: 11px;
}

.view svg{
    width: 10px;
    height: 10px;
}

.view.on{
    border: 1px solid #6cb2e2;
    background: #e3f1fb;
}

.view.on svg{
    width: 9px;
    height: 9px;
}

.lbtn{
    display: flex;
    align-items: center;
    justify-content: center;
    width: 10px;
    border-right: 1px solid #777;
    background: #fafafa;
}

.hthumb{
    flex: 1;
    margin-right: 1px;
    border-right: 1px solid #777;
    border-bottom: 1px solid #888;
    background: #f0f0f0;
}

/* status bar */
.status{
    display: flex;
    align-items: center;
    height: 15px;
    padding-left: 7px;
    background: #f0f0f0;
    letter-spacing: -.05px;
    white-space: nowrap;
}

.status span{
    flex: none;
}

.st-page{ width: 52px; }
.st-sec{ width: 55px; }
.st-of{ width: 37px; }
.st-at{ width: 47px; }
.st-ln{ width: 32px; }
.st-col{ width: 43px; }

.st-lang{
    width: 59px;
    letter-spacing: -.15px;
}

.status .off{
    width: 21.5px;
    letter-spacing: -.2px;
    color: #aaa;
}

.book{
    width: 14px;
    height: 10px;
}

.grip{
    width: 9px;
    height: 9px;
    margin: 5px 0 0 auto;
}

/* taskbar */
.taskbar{
    display: flex;
    align-items: center;
    height: 27px;
    margin-top: 1px;
    border-top: 1px solid #bccce0;
    background: linear-gradient(90deg, #8da4c6 0, #a0b8d8 80px, #a7c0dd 330px, #a7c0dd 1150px, #7b93b4 1175px, #7b93b4);
}

.orb{
    width: 38px;
    padding-left: 6px;
}

.orb svg{
    width: 24px;
    height: 24px;
}

.task{
    display: flex;
    align-items: center;
    justify-content: center;
    flex: none;
    width: 39px;
    height: 26px;
    margin-right: 2px;
    border: 1px solid #7f96b8;
    border-radius: 2px;
    background: linear-gradient(135deg, #d0def0, #a9c0dd 60%, #b4cae6);
    box-shadow: inset 0 0 0 1px #c7d8ed;
}

.task svg{
    width: 21px;
    height: 21px;
}

.task.plain{
    width: 41px;
    border: none;
    background: none;
    box-shadow: none;
}

.task.active{
    width: 37px;
    margin-right: 4px;
    background: linear-gradient(135deg, #f4f8fd, #dbe7f5 60%, #e6effa);
    box-shadow: 2px 0 0 #c7d8ed;
}

.logo-w{
    font-family: "Liberation Serif", serif;
    font-size: 17px;
    font-weight: bold;
    font-style: italic;
    letter-spacing: 0;
    fill: #15176e;
    stroke: #15176e;
    stroke-width: .8px;
}

.task.stack{
    margin-right: 3px;
}

.task.excel{
    width: 39px;
}

.tray{
    display: flex;
    align-items: center;
    height: 26px;
    margin-left: auto;
    color: #fff;
}

.tray-up{
    width: 6px;
    height: 4px;
    margin-right: 8px;
}

.tray-ico{
    width: 11px;
    height: 11px;
    margin-right: 5px;
}

.clock{
    display: flex;
    flex-direction: column;
    align-items: center;
    width: 38px;
    margin: 0 5px;
    line-height: 11px;
    white-space: nowrap;
}

.peek{
    width: 9px;
    height: 26px;
    border-left: 1px solid #5c7394;
    background: linear-gradient(135deg, #8fa3bf, #5f7596 50%, #7c92b1);
}
```
